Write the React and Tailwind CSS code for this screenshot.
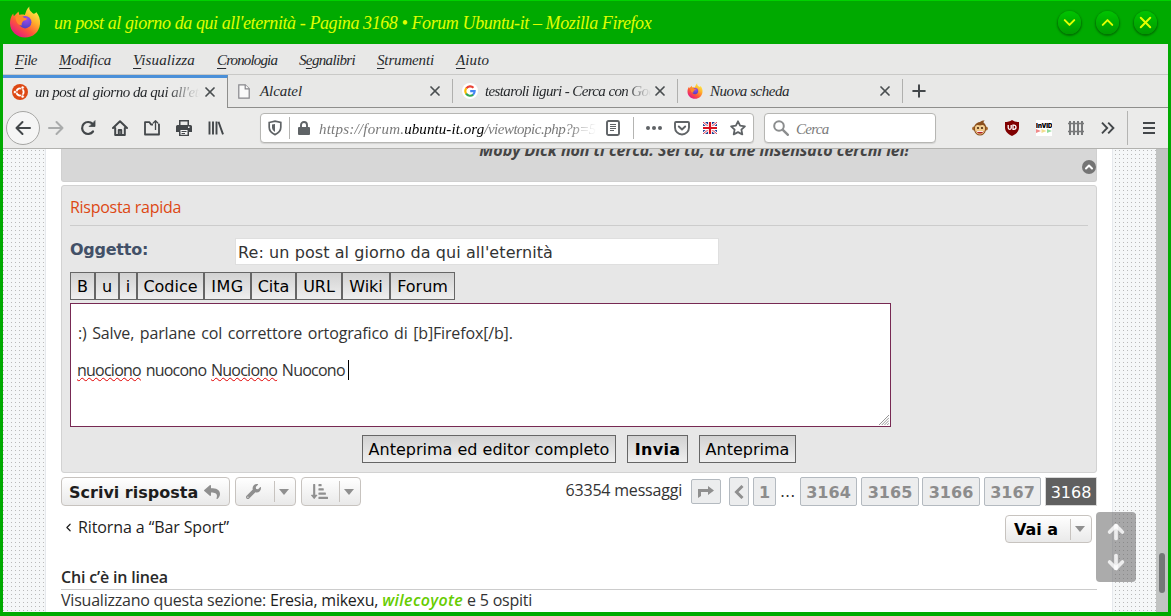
import { ArrowDown, ArrowUp, ChevronDown, ChevronLeft, ChevronUp, Plus, X } from "lucide-react";
import { FaReply, FaWrench, FaSortAmountDownAlt } from "react-icons/fa";

const CHANCERY = "font-['Liberation_Serif',serif] italic";
const UBUNTU = "font-['Open_Sans',sans-serif]";
const VERDANA = "font-['DejaVu_Sans',sans-serif]";

const menus = [
  { pre: "", key: "F", rest: "ile", cls: "w-[22px] tracking-[-0.55px]" },
  { pre: "", key: "M", rest: "odifica", cls: "w-[52px] tracking-[-0.27px]" },
  { pre: "", key: "V", rest: "isualizza", cls: "w-[62px] tracking-[0.14px]" },
  { pre: "", key: "C", rest: "ronologia", cls: "w-[60px] tracking-[-0.86px]" },
  { pre: "S", key: "e", rest: "gnalibri", cls: "w-[56px] tracking-[-0.65px]" },
  { pre: "", key: "S", rest: "trumenti", cls: "w-[57px] tracking-[-0.15px]" },
  { pre: "", key: "A", rest: "iuto", cls: "w-[33px] tracking-[0.1px]" },
];

const bbcodes = [
  { label: "B", cls: "w-[25px]" },
  { label: "u", cls: "w-[24px]" },
  { label: "i", cls: "w-[18px]" },
  { label: "Codice", cls: "w-[67px]" },
  { label: "IMG", cls: "w-[47px] tracking-[0.5px]" },
  { label: "Cita", cls: "w-[45px]" },
  { label: "URL", cls: "w-[46px]" },
  { label: "Wiki", cls: "w-[48px]" },
  { label: "Forum", cls: "w-[65px]" },
];

const pages = [
  { n: "3164", cls: "w-[57px] ml-1" },
  { n: "3165", cls: "w-[58px] ml-1" },
  { n: "3166", cls: "w-[58px] ml-[3px]" },
  { n: "3167", cls: "w-[57px] ml-1" },
];

function FirefoxLogo({ className }) {
  return (
    <svg viewBox="0 0 32 32" className={className}>
      <defs>
        <linearGradient id="fxFlame" x1="0.85" y1="0.05" x2="0.2" y2="0.95">
          <stop offset="0" stopColor="#fff44f" />
          <stop offset="0.35" stopColor="#ffb12b" />
          <stop offset="0.65" stopColor="#ff5a36" />
          <stop offset="1" stopColor="#e31587" />
        </linearGradient>
        <radialGradient id="fxGlobe" cx="0.6" cy="0.25" r="0.8">
          <stop offset="0" stopColor="#a04be8" />
          <stop offset="1" stopColor="#4a3fc4" />
        </radialGradient>
      </defs>
      <path d="M20.500 0.500c-1 2.800 1.200 5.200 4 7.200 2-.2 2.500-1 2.700-1.700 2.600 3 4.300 7 3.800 12C30.200 26.300 24 31.500 16 31.500S1 25.500 1 17.300c0-4 1-7.200 3.200-9.800l.6 2.800L9.500 5.600l.9 3.300c2.200-.6 4.200-.4 5.400 0C17 6 17.800 2.500 20.500.5z" fill="url(#fxFlame)" />
      <circle cx="16.200" cy="16.200" r="6.200" fill="url(#fxGlobe)" />
      <path d="M6.500 10.500c3.500-1.600 6.500-.9 8.500 1.300l3 .7c-.4 1.700-2.400 2-3.800 2.400-1.200 1.800-2 2.900-1.400 4.600C9 19.500 6.500 15.500 6.500 10.500z" fill="#ff8a2b" />
    </svg>
  );
}

function UbuntuLogo() {
  return (
    <svg viewBox="0 0 16 16" className="size-4">
      <circle cx="8" cy="8" r="8" fill="#dd4814" />
      <circle cx="8" cy="8" r="3.600" fill="none" stroke="#fff" strokeWidth="1.900" />
      <path d="M8 8L3 8M8 8l2.600-4.500M8 8l2.600 4.500" stroke="#dd4814" strokeWidth="0.800" />
      <circle cx="8" cy="8" r="1.800" fill="#dd4814" />
      <g fill="#fff" stroke="#dd4814" strokeWidth="0.600">
        <circle cx="2.900" cy="8" r="1.600" />
        <circle cx="10.600" cy="3.500" r="1.600" />
        <circle cx="10.600" cy="12.500" r="1.600" />
      </g>
    </svg>
  );
}

function GoogleLogo() {
  return (
    <svg viewBox="0 0 16 16" className="size-4">
      <circle cx="8" cy="8" r="8" fill="#fff" />
      <g fill="none" strokeWidth="2.100">
        <path d="M4.300 5.300A4.800 4.800 0 0 1 11.500 4.700" stroke="#ea4335" />
        <path d="M4.200 10.800A4.800 4.800 0 0 1 4.300 5.200" stroke="#fbbc05" />
        <path d="M11.200 11.600A4.800 4.800 0 0 1 4.100 10.700" stroke="#34a853" />
        <path d="M8.200 8.100h4.500A4.700 4.700 0 0 1 11.100 11.700" stroke="#4285f4" />
      </g>
    </svg>
  );
}

function TabClose() {
  return <X size={16} strokeWidth={2.600} className="shrink-0 text-[#4a4e50]" />;
}

function WindowButton({ children }) {
  return (
    <div className="flex size-[23px] items-center justify-center rounded-full bg-linear-to-b from-[#00c400] to-[#009a00] text-[#e4ff00] shadow-[0_1px_2px_1px_rgba(0,70,0,0.55)]">
      {children}
    </div>
  );
}

function TitleBar() {
  return (
    <div className="flex h-11 shrink-0 items-center bg-[#00aa00] pr-[14px] pl-[9px] shadow-[inset_0_1px_0_#00d200]">
      <FirefoxLogo className="mt-[-1px] size-8 shrink-0" />
      <span className={`${CHANCERY} mt-[3px] ml-[13px] grow whitespace-pre text-[18px] tracking-[-0.41px] text-[#e0ff00]`}>
        un post al giorno da qui all'eternità - Pagina 3168 • Forum Ubuntu-it – Mozilla Firefox
      </span>
      <div className="flex gap-[15px]">
        <WindowButton><ChevronDown size={19} strokeWidth={2.500} /></WindowButton>
        <WindowButton><ChevronUp size={19} strokeWidth={2.500} /></WindowButton>
        <WindowButton><X size={19} strokeWidth={2.500} /></WindowButton>
      </div>
    </div>
  );
}

function MenuBar() {
  return (
    <div className={`${CHANCERY} flex h-[31px] shrink-0 items-center gap-[22px] border-b border-[#c9c9c7] bg-[#e8e8e7] pt-[2px] pl-3 text-[15px] text-[#26292c]`}>
      {menus.map((m) => (
        <span key={m.key + m.rest} className={`${m.cls} whitespace-pre`}>
          {m.pre}<span className="underline underline-offset-[3px]">{m.key}</span>{m.rest}
        </span>
      ))}
    </div>
  );
}

function TabBar() {
  return (
    <div className={`${CHANCERY} flex h-[33px] shrink-0 bg-[#e8e8e7] text-[15px] text-[#26292c]`}>
      <div className="flex w-[225px] items-center border-t-[3px] border-r border-t-[#4a90d9] border-r-[#8e8e8c] bg-[#ebebea] pr-[8px] pb-[2px] pl-[9px]">
        <UbuntuLogo />
        <div className="ml-[7px] w-[167px] overflow-hidden whitespace-pre tracking-[-0.48px] mask-[linear-gradient(to_right,#000_130px,transparent_165px)]">
          un post al giorno da qui all'eternità
        </div>
        <TabClose />
      </div>
      <div className="flex grow items-center border-b border-[#8e8e8c]">
        <div className="flex h-6 w-[225px] items-center border-r border-[#b0b0ae] pr-[9px] pl-[10px]">
          <svg viewBox="0 0 12 15" className="h-[15px] w-3" fill="#fafafa" stroke="#86868a" strokeWidth="1.200">
            <path d="M.8.8h6.400l4 4v9.400H.8z" />
            <path d="M7.200.8v4h4" />
          </svg>
          <div className="ml-[10px] grow tracking-[-0.07px]">Alcatel</div>
          <TabClose />
        </div>
        <div className="flex h-6 w-[225px] items-center border-r border-[#b0b0ae] pr-[9px] pl-[9px]">
          <GoogleLogo />
          <div className="ml-[7px] w-[167px] overflow-hidden whitespace-pre tracking-[-0.62px] mask-[linear-gradient(to_right,#000_140px,transparent_166px)]">
            testaroli liguri - Cerca con Google
          </div>
          <TabClose />
        </div>
        <div className="flex h-6 w-[225px] items-center border-r border-[#b0b0ae] pr-[9px] pl-[9px]">
          <FirefoxLogo className="size-4" />
          <div className="ml-[7px] grow tracking-[-0.45px]">Nuova scheda</div>
          <TabClose />
        </div>
        <Plus size={20} strokeWidth={2.400} className="ml-[6px] text-[#43474a]" />
      </div>
    </div>
  );
}

function ToolbarIcons() {
  return (
    <div className="flex items-center text-[#43474a]">
      <div className="flex size-[34px] items-center justify-center rounded-full border border-[#a6a6a4] bg-[#f5f5f5]">
        <svg viewBox="0 0 16 16" className="size-4" fill="none" stroke="currentColor" strokeWidth="2" strokeLinecap="round" strokeLinejoin="round">
          <path d="M15 8H1.500M7.500 2L1.500 8l6 6" />
        </svg>
      </div>
      <svg viewBox="0 0 16 16" className="ml-2 size-4" fill="none" stroke="#a9abab" strokeWidth="2" strokeLinecap="round" strokeLinejoin="round">
        <path d="M1 8h13.500M8.500 2l6 6-6 6" />
      </svg>
      <svg viewBox="0 0 16 16" className="ml-4 size-4" fill="none" stroke="currentColor" strokeWidth="2.200" strokeLinecap="round">
        <path d="M13 11.500A6 6 0 1 1 12.600 4" />
        <path d="M15 1v5.500H9.500z" fill="currentColor" stroke="currentColor" strokeWidth="0.800" strokeLinejoin="round" />
      </svg>
      <svg viewBox="0 0 16 16" className="ml-4 size-4" fill="none" stroke="currentColor" strokeWidth="2" strokeLinecap="round" strokeLinejoin="round">
        <path d="M1 8l7-6.800L15 8M3.200 8v7h9.600V8" />
        <path d="M6.800 14v-4h2.400v4" />
      </svg>
      <svg viewBox="0 0 16 16" className="ml-4 size-4" fill="none" stroke="currentColor" strokeWidth="1.800" strokeLinejoin="round">
        <path d="M9 4.500H7L5.500 2.200H1v12.300h14V4.500h-1" />
        <path d="M11.500 10V1M9 3.200L11.500.8 14 3.200" strokeWidth="1.300" />
      </svg>
      <svg viewBox="0 0 16 16" className="ml-4 size-4" fill="currentColor">
        <path d="M3 0h10v5h-1.500V1.500h-7V5H3zM1.500 5h13A1.500 1.500 0 0 1 16 6.500V12h-3v4H3v-4H0V6.500A1.500 1.500 0 0 1 1.500 5z" />
        <path d="M4.500 10h7v4.700h-7zM12 6.500h1.500V8H12z" fill="#f5f5f5" />
        <path d="M5.500 11h5v1h-5zM5.500 13h3.500v1H5.500z" />
      </svg>
      <svg viewBox="0 0 16 16" className="ml-4 size-4" fill="none" stroke="currentColor" strokeWidth="1.900">
        <path d="M1.500 1.500v13M5 1.500v13M8.500 1.500v13M10.500 1.800l4.500 12.600" />
      </svg>
    </div>
  );
}

function UrlBar() {
  return (
    <div className={`${CHANCERY} ml-[36px] flex h-[30px] w-[494px] items-center rounded border border-[#b6b6b3] bg-white px-[7px] text-[15px] text-[#7a7a7a] shadow-[0_1px_1px_rgba(0,0,0,0.1)]`}>
      <svg viewBox="0 0 14 16" className="h-4 w-[14px] shrink-0" fill="none" stroke="#5f6366" strokeWidth="1.700">
        <path d="M1.200 2.500L7 1.200l5.800 1.300v4.800c0 3.600-2.400 5.900-5.800 7.300-3.400-1.400-5.800-3.700-5.800-7.300z" />
        <path d="M7 4v8C5.200 10.900 4 9.500 4 7.300V4.600z" fill="#5f6366" stroke="none" />
      </svg>
      <div className="ml-[7px] h-[22px] w-px shrink-0 bg-[#b4b4b2]" />
      <svg viewBox="0 0 12 14" className="ml-2 h-[14px] w-3 shrink-0" fill="#5f6366">
        <path d="M1 6h10a1 1 0 0 1 1 1v6a1 1 0 0 1-1 1H1a1 1 0 0 1-1-1V7a1 1 0 0 1 1-1z" />
        <path d="M3 6.500V4a3 3 0 0 1 6 0v2.500" fill="none" stroke="#5f6366" strokeWidth="1.900" />
      </svg>
      <div className="mt-[2px] ml-[9px] flex w-[281px] overflow-hidden whitespace-pre mask-[linear-gradient(to_right,#000_250px,transparent_277px)]">
        <span className="tracking-[0.22px]">https://forum.</span>
        <span className="tracking-[0.08px] text-black">ubuntu-it.org</span>
        <span className="tracking-[-0.5px]">/viewtopic.php?p=5</span>
      </div>
      <svg viewBox="0 0 14 16" className="ml-2 h-4 w-[14px] shrink-0" fill="none" stroke="#5f6366">
        <rect x="1" y="1" width="12" height="14" rx="1.500" strokeWidth="1.900" />
        <path d="M4 4.500h6M4 6.500h6M4 8.500h6M4 10.500h4" />
      </svg>
      <div className="ml-[13px] h-[22px] w-px shrink-0 bg-[#b4b4b2]" />
      <svg viewBox="0 0 16 4" className="ml-[12px] h-1 w-4 shrink-0" fill="#5f6366">
        <circle cx="2" cy="2" r="2" /><circle cx="8" cy="2" r="2" /><circle cx="14" cy="2" r="2" />
      </svg>
      <svg viewBox="0 0 16 16" className="ml-3 size-4 shrink-0" fill="none" stroke="#5f6366" strokeWidth="1.900" strokeLinecap="round" strokeLinejoin="round">
        <path d="M2 2h12a1 1 0 0 1 1 1v4.500a7 7 0 0 1-14 0V3a1 1 0 0 1 1-1z" />
        <path d="M4.800 6.500L8 9.500l3.200-3" />
      </svg>
      <svg viewBox="0 0 14 12" className="mt-[-1px] ml-[13px] h-3 w-[14px] shrink-0">
        <path d="M0 0h14v12H0z" fill="#1f3f94" />
        <path d="M0 0l14 12M14 0L0 12" stroke="#fff" strokeWidth="2.600" />
        <path d="M0 0l14 12M14 0L0 12" stroke="#d8203a" strokeWidth="0.900" />
        <path d="M7 0v12M0 6h14" stroke="#fff" strokeWidth="4" />
        <path d="M7 0v12M0 6h14" stroke="#d8101e" strokeWidth="2.200" />
      </svg>
      <svg viewBox="0 0 16 16" className="ml-[13px] size-4 shrink-0" fill="none" stroke="#5f6366" strokeWidth="1.800" strokeLinejoin="round">
        <path d="M8 1.300l2.100 4.400 4.800.6-3.500 3.300.9 4.800L8 12.100l-4.300 2.300.9-4.800L1.100 6.300l4.800-.6z" />
      </svg>
    </div>
  );
}

function Extensions() {
  return (
    <div className="flex grow items-center pl-9 text-[#43474a]">
      <svg viewBox="0 0 16 16" className="size-4 shrink-0">
        <circle cx="2" cy="8.500" r="1.900" fill="#a5682c" />
        <circle cx="14" cy="8.500" r="1.900" fill="#a5682c" />
        <path d="M8 2C10 .3 12 .3 13 .6c-1 .4-1.300 1-1.500 1.800C14 4 14.500 7 14 10c-.6 3.500-3 5.500-6 5.500S2.600 13.500 2 10C1.500 6 3.500 2.500 8 2z" fill="#8a4f1d" />
        <path d="M3.200 6.500C5 4 7 5 8 5.500c1-.5 3-1.500 4.800 1 .8 4-.8 8-4.800 8s-5.600-4-4.800-8z" fill="#f2cd8f" />
        <circle cx="6" cy="8" r="1.100" fill="#4b2a10" />
        <circle cx="10" cy="8" r="1.100" fill="#4b2a10" />
        <path d="M4.500 11h7C11 13 9.500 13.600 8 13.600S5 13 4.500 11z" fill="#b0232a" />
        <path d="M5 11h6v.9H5z" fill="#fff" />
      </svg>
      <svg viewBox="0 0 16 16" className="ml-4 size-4 shrink-0">
        <path d="M8 0c2 1.400 4.500 2 7 2v5.500c0 4-3 6.700-7 8.500-4-1.800-7-4.500-7-8.500V2c2.500 0 5-.6 7-2z" fill="#800000" />
        <path d="M4.200 5v2.800a1.500 1.500 0 0 0 3 0V5M9 5.200v4.200h.9a2.100 2.100 0 0 0 0-4.200z" fill="none" stroke="#fff" strokeWidth="1.300" />
      </svg>
      <div className="ml-4 flex h-4 w-4 shrink-0 flex-col items-center overflow-hidden bg-white">
        <span className="mt-[2px] font-['Open_Sans',sans-serif] text-[6.500px] leading-[7px] font-extrabold tracking-[-0.3px] text-black">InVID</span>
        <svg viewBox="0 0 16 4" className="h-1 w-4">
          <path d="M0 0l5 2-5 2z" fill="#f08a8a" />
          <path d="M5.500 0l5 2-5 2z" fill="#f2dc8c" />
          <path d="M11 0l5 2-5 2z" fill="#8fdc9c" />
        </svg>
      </div>
      <svg viewBox="0 0 16 16" className="ml-4 size-4 shrink-0" fill="none" stroke="#77797a">
        <path d="M2 1v14M6 1v14M10 1v14M14 1v14" strokeWidth="2" />
        <path d="M0 3.500h16M0 11.500h16" strokeWidth="1.300" />
      </svg>
      <svg viewBox="0 0 14 12" className="ml-[17px] h-3 w-[14px] shrink-0" fill="none" stroke="currentColor" strokeWidth="1.900">
        <path d="M1 .7L6.200 6 1 11.300M7.200.7L12.400 6l-5.200 5.300" />
      </svg>
      <div className="ml-[12px] h-[34px] w-px bg-[#b4b4b2]" />
      <svg viewBox="0 0 12 12" className="ml-[15px] size-3 shrink-0" stroke="currentColor" strokeWidth="2">
        <path d="M0 1h12M0 6h12M0 11h12" />
      </svg>
    </div>
  );
}

function Toolbar() {
  return (
    <div className="flex h-[41px] shrink-0 items-center border-b border-[#b2b2af] bg-[#ebebea] pl-[3px]">
      <ToolbarIcons />
      <UrlBar />
      <div className={`${CHANCERY} ml-[10px] flex h-[30px] w-[172px] items-center rounded border border-[#b6b6b3] bg-white pl-[8px] text-[15px] text-[#7a7a7a] shadow-[0_1px_1px_rgba(0,0,0,0.1)]`}>
        <svg viewBox="0 0 16 16" className="size-4" fill="none" stroke="#8b8d8e" strokeWidth="2">
          <circle cx="6" cy="6" r="4.800" />
          <path d="M9.600 9.600l6 6" strokeWidth="2.400" />
        </svg>
        <span className="mt-[2px] ml-[7px] tracking-[-0.7px]">Cerca</span>
      </div>
      <Extensions />
    </div>
  );
}

const buttonStyle = "flex h-7 shrink-0 items-center justify-center whitespace-pre border border-[#666] bg-linear-to-b from-[#d2d2d2] to-[#efefef] pt-px text-black";
const pillStyle = "flex shrink-0 items-center whitespace-pre rounded border border-[#c7c3bf] bg-linear-to-b from-white to-[#e9e9e9]";

function Caret() {
  return (
    <svg viewBox="0 0 10 6" className="h-[6px] w-[10px]" fill="#8f8f8f">
      <path d="M0 0h10L5 6z" />
    </svg>
  );
}

function Misspelled({ children }) {
  return (
    <span className="underline decoration-[#e00000] decoration-wavy decoration-[1px] underline-offset-[1px] [text-decoration-skip-ink:none]">
      {children}
    </span>
  );
}

function QuickReply() {
  return (
    <div className="mt-[3px] flex h-72 shrink-0 flex-col rounded-[3px] border border-[#d2d2d2] bg-[#e7e7e7] px-2">
      <div className={`${UBUNTU} h-10 border-b border-[#ccc] text-[16px] leading-[42px] tracking-[-0.28px] text-[#dd4814]`}>Risposta rapida</div>
      <div className={`${VERDANA} mt-3 flex h-[27px] text-[16px]`}>
        <span className="w-[165px] leading-[24px] font-bold tracking-[-0.25px] text-[#425067]">Oggetto:</span>
        <div className="w-[484px] border border-[#dfdfdf] bg-white pl-[2px] leading-[27px] tracking-[0.08px] whitespace-pre text-[#333]">
          Re: un post al giorno da qui all'eternità
        </div>
      </div>
      <div className={`${VERDANA} mt-[7px] flex text-[16px]`}>
        {bbcodes.map((b) => (
          <div key={b.label} className={`${buttonStyle} ${b.cls}`}>{b.label}</div>
        ))}
      </div>
      <div className={`${UBUNTU} relative mt-[3px] h-[124px] w-[821px] shrink-0 border border-[#772953] bg-white px-[7px] pt-5 text-[16px] text-[#333]`}>
        <div className="h-[36px] leading-[19px] tracking-[-0.15px] whitespace-pre [word-spacing:1.600px]">:) Salve, parlane col correttore ortografico di [b]Firefox[/b].</div>
        <div className="-ml-px flex h-5 items-center leading-[19px] tracking-[-0.76px] whitespace-pre [word-spacing:1.300px]">
          <Misspelled>nuociono</Misspelled> nuocono <Misspelled>Nuociono</Misspelled> Nuocono
          <span className="ml-[3px] h-5 w-px bg-black" />
        </div>
        <svg viewBox="0 0 11 11" className="absolute right-px bottom-px size-[10px]" stroke="#8a8a8a" strokeWidth="1">
          <path d="M0 11L11 0M3 11l8-8M6 11l5-5M9 11l2-2" />
        </svg>
      </div>
      <div className={`${VERDANA} mt-2 flex justify-center gap-[11px] text-[16px]`}>
        <div className={`${buttonStyle} w-[254px] pt-[2px]`}>Anteprima ed editor completo</div>
        <div className={`${buttonStyle} w-[61px] pt-[2px] font-bold tracking-[0.3px]`}>Invia</div>
        <div className={`${buttonStyle} w-[97px] pt-[2px]`}>Anteprima</div>
      </div>
    </div>
  );
}

function ActionBar() {
  return (
    <div className={`${VERDANA} mt-1 flex h-[29px] shrink-0 text-[16px]`}>
      <div className={`${pillStyle} w-[169px] pl-[7px] font-bold text-[#1d1d1d]`}>
        <span className="pt-[2px]">Scrivi risposta</span>
        <FaReply size={16} className="ml-[6px] text-[#8f8f8f]" />
      </div>
      <div className={`${pillStyle} ml-[5px] w-[61px] pl-[10px]`}>
        <FaWrench size={15} className="text-[#8f8f8f]" />
        <div className="mr-[4px] ml-[13px] h-[21px] w-px bg-[#c7c3bf]" />
        <Caret />
      </div>
      <div className={`${pillStyle} ml-[5px] w-[60px] pl-[9px]`}>
        <FaSortAmountDownAlt size={17} className="text-[#8f8f8f]" />
        <div className="mr-[4px] ml-[11px] h-[21px] w-px bg-[#c7c3bf]" />
        <Caret />
      </div>
      <span className={`${UBUNTU} ml-auto text-[16px] leading-[27px] tracking-[-0.2px] whitespace-pre text-[#333]`}>63354 messaggi</span>
      <div className="mt-[2px] ml-[9px] flex h-[25px] w-[30px] items-center justify-center rounded-[2px] border border-[#b4bac0] bg-[#ecedee]">
        <svg viewBox="0 0 16 12" className="h-3 w-4" fill="#8f8f8f">
          <path d="M0 12V3h10V0l6 4.500L10 9V6H3v4z" />
        </svg>
      </div>
      <div className="ml-2 flex w-5 items-center justify-center rounded-[2px] border border-[#b4bac0] bg-[#ecedee]">
        <svg viewBox="0 0 10 14" className="h-[14px] w-[10px]" fill="none" stroke="#8f8f8f" strokeWidth="3">
          <path d="M8.500 1L2.500 7l6 6" />
        </svg>
      </div>
      <div className="ml-1 flex w-[23px] items-center justify-center rounded-[2px] border border-[#b4bac0] bg-[#ecedee] pt-[2px] font-bold text-[#8c8c8c]">1</div>
      <span className="ml-[4px] w-[16px] leading-[29px] text-[#333]">...</span>
      {pages.map((p) => (
        <div key={p.n} className={`${p.cls} flex items-center justify-center rounded-[2px] border border-[#b4bac0] bg-[#ecedee] pt-[2px] font-bold text-[#8c8c8c]`}>{p.n}</div>
      ))}
      <div className="ml-1 flex w-[52px] items-center justify-center border border-[#d8d8d8] bg-[#606060] pt-[2px] text-white">3168</div>
    </div>
  );
}

function Page() {
  return (
    <div className="flex h-[463px] shrink-0 bg-[#f5f7f8] bg-[radial-gradient(circle_at_0.5px_1.5px,#b9b9b9_0.6px,transparent_0.7px)] bg-size-[4px_4px]">
      <div className="relative ml-[42px] flex w-[1068px] flex-col border-x border-[#e6e9ed] bg-white pr-[15px] pl-[15px]">
        <div className="flex h-[33px] shrink-0 justify-end overflow-hidden rounded-b-[3px] border-x border-b border-[#d0d0d0] bg-[#d7d7d7]">
          <span className={`${UBUNTU} mt-[-11px] mr-[173px] text-[16px] leading-6 font-bold tracking-[-0.04px] whitespace-pre text-[#444] italic`}>
            Moby Dick non ti cerca. Sei tu, tu che insensato cerchi lei!
          </span>
          <div className="mt-[11px] flex size-[14px] items-center justify-center rounded-full bg-[#757575] text-white">
            <ChevronUp size={12} strokeWidth={4} />
          </div>
        </div>
        <QuickReply />
        <ActionBar />
        <div className="mt-[9px] flex h-7 shrink-0 justify-between">
          <span className={`${UBUNTU} flex text-[16px] leading-[24px] tracking-[-0.1px] whitespace-pre text-[#1d1d1d]`}>
            <ChevronLeft size={13} strokeWidth={2.200} className="mt-[6px] mr-[3px] ml-px" />Ritorna a “Bar Sport”
          </span>
          <div className={`${VERDANA} ${pillStyle} mr-[5px] w-[87px] pl-[8px] text-[16px] font-bold text-black`}>
            <span className="pt-[2px]">Vai a</span>
            <div className="mr-[4px] ml-[12px] h-[21px] w-px bg-[#c7c3bf]" />
            <Caret />
          </div>
        </div>
        <div className={`${UBUNTU} mt-[22px] h-[25px] shrink-0 border-b border-[#ccc] text-[16px] leading-[24px] font-semibold tracking-[-0.17px] text-[#2a2a2a]`}>
          Chi c’è in linea
        </div>
        <div className={`${UBUNTU} flex text-[16px] leading-[21px] whitespace-pre text-[#1d1d1d]`}>
          <span className="tracking-[-0.22px] text-[#333]">Visualizzano questa sezione: </span>
          <span className="tracking-[-0.24px]">Eresia, mikexu, </span>
          <span className="font-semibold tracking-[0.37px] text-[#66cc00] italic">wilecoyote</span>
          <span className="tracking-[-0.23px] text-[#333]"> e 5 ospiti</span>
        </div>
        <div className="absolute top-[363px] left-[1050px] flex h-[70px] w-10 flex-col items-center justify-center gap-[8px] rounded bg-[#666]/55 text-white/80">
          <ArrowUp size={22} strokeWidth={4} />
          <ArrowDown size={22} strokeWidth={4} />
        </div>
      </div>
      <div className="ml-auto flex w-3 justify-center bg-[#c1c3c2] pt-[404px]">
        <div className="h-10 w-[6px] rounded-full bg-[#747677]" />
      </div>
    </div>
  );
}

export default function App() {
  return (
    <div className="flex h-[616px] w-[1171px] flex-col overflow-hidden bg-[#00aa00]">
      <TitleBar />
      <div className="mx-[3px] flex grow flex-col">
        <MenuBar />
        <TabBar />
        <Toolbar />
        <Page />
      </div>
    </div>
  );
}
